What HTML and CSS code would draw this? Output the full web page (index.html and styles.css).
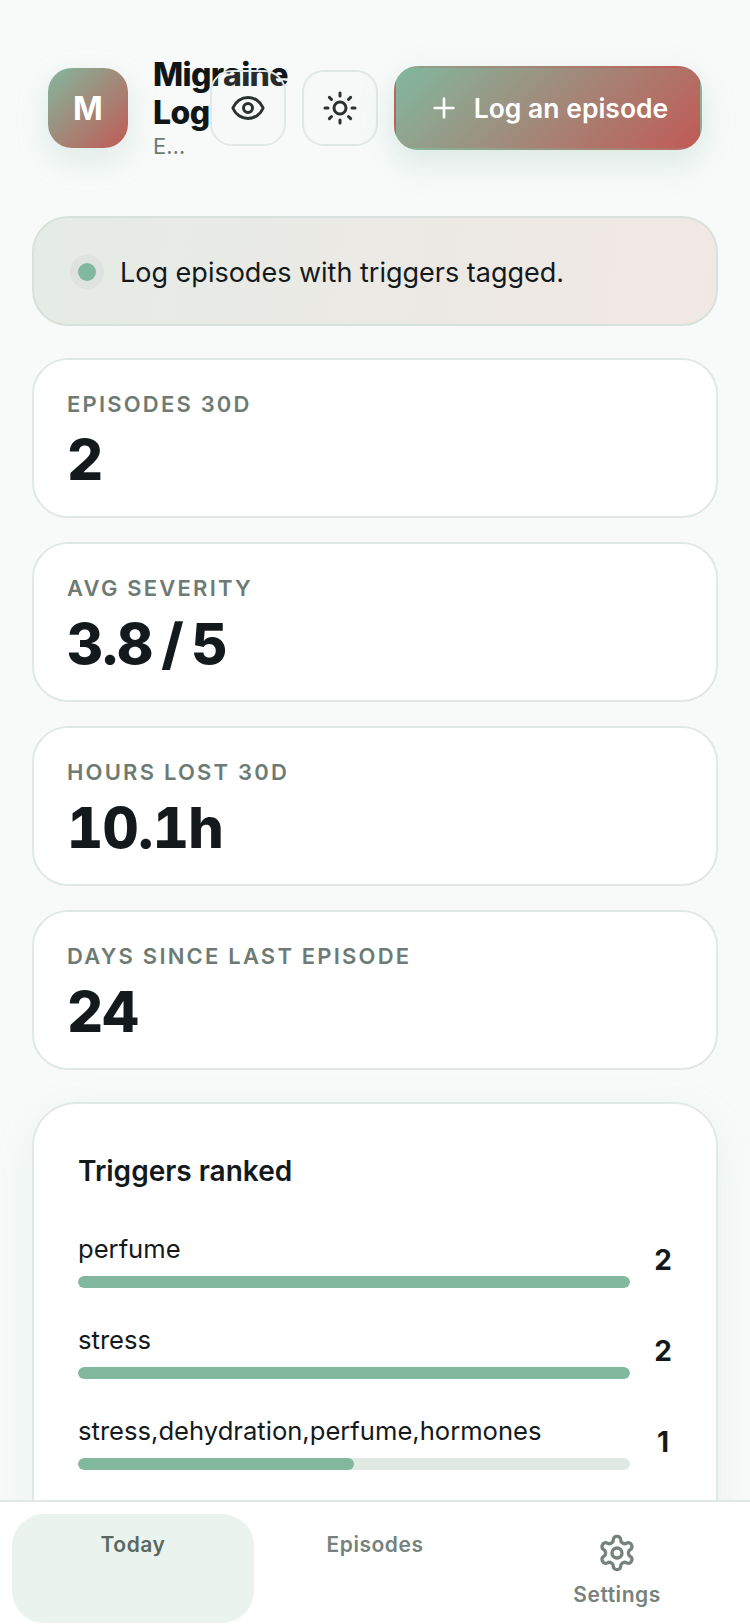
FILE: index.html
```html
<!DOCTYPE html>
<html lang="en">
<head>
    <meta charset="UTF-8">
    <meta name="viewport" content="width=device-width, initial-scale=1.0">
    <title>Migraine Log</title>
    <link rel="stylesheet" href="styles.css">
</head>
<body>
    <div class="app">
        <main class="content">
            <!-- header -->
            <header class="top">
                <div class="brand">
                    <div class="avatar">M</div>
                    <div class="brand-text">
                        <h1 class="brand-title">Migraine Log</h1>
                        <p class="brand-sub">Episodes and triggers</p>
                    </div>
                </div>
                <button class="icon-btn" aria-label="Privacy">
                    <svg class="icon" viewBox="0 0 24 24"><path d="M2.062 12.348a1 1 0 0 1 0-.696 10.75 10.75 0 0 1 19.876 0 1 1 0 0 1 0 .696 10.75 10.75 0 0 1-19.876 0"/><circle cx="12" cy="12" r="3"/></svg>
                </button>
                <button class="icon-btn" aria-label="Theme">
                    <svg class="icon" viewBox="0 0 24 24"><circle cx="12" cy="12" r="4"/><path d="M12 2v2"/><path d="M12 20v2"/><path d="m4.93 4.93 1.41 1.41"/><path d="m17.66 17.66 1.41 1.41"/><path d="M2 12h2"/><path d="M20 12h2"/><path d="m6.34 17.66-1.41 1.41"/><path d="m19.07 4.93-1.41 1.41"/></svg>
                </button>
                <button class="cta">
                    <svg class="icon icon-plus" viewBox="0 0 24 24"><path d="M5 12h14"/><path d="M12 5v14"/></svg>
                    Log an episode
                </button>
            </header>

            <!-- notice -->
            <section class="notice">
                <span class="notice-dot"></span>
                <span>Log episodes with triggers tagged.</span>
            </section>

            <!-- stats -->
            <section class="stat">
                <div class="stat-label">EPISODES 30D</div>
                <div class="stat-value">2</div>
            </section>
            <section class="stat">
                <div class="stat-label">AVG SEVERITY</div>
                <div class="stat-value">3.8 / 5</div>
            </section>
            <section class="stat">
                <div class="stat-label">HOURS LOST 30D</div>
                <div class="stat-value">10.1h</div>
            </section>
            <section class="stat">
                <div class="stat-label">DAYS SINCE LAST EPISODE</div>
                <div class="stat-value">24</div>
            </section>

            <!-- triggers -->
            <section class="panel">
                <h2 class="panel-title">Triggers ranked</h2>
                <div class="rank">
                    <div class="rank-main">
                        <div class="rank-name">perfume</div>
                        <div class="track"><div class="fill" style="width: 100%"></div></div>
                    </div>
                    <div class="rank-count">2</div>
                </div>
                <div class="rank">
                    <div class="rank-main">
                        <div class="rank-name">stress</div>
                        <div class="track"><div class="fill" style="width: 100%"></div></div>
                    </div>
                    <div class="rank-count">2</div>
                </div>
                <div class="rank">
                    <div class="rank-main">
                        <div class="rank-name">stress,dehydration,perfume,hormones</div>
                        <div class="track"><div class="fill" style="width: 50%"></div></div>
                    </div>
                    <div class="rank-count">1</div>
                </div>
            </section>
        </main>

        <!-- bottom nav -->
        <nav class="tabs">
            <a class="tab tab-active">Today</a>
            <a class="tab">Episodes</a>
            <a class="tab">
                <svg class="icon tab-icon" viewBox="0 0 24 24"><path d="M12.22 2h-.44a2 2 0 0 0-2 2v.18a2 2 0 0 1-1 1.73l-.43.25a2 2 0 0 1-2 0l-.15-.08a2 2 0 0 0-2.73.73l-.22.38a2 2 0 0 0 .73 2.73l.15.1a2 2 0 0 1 1 1.72v.51a2 2 0 0 1-1 1.74l-.15.09a2 2 0 0 0-.73 2.73l.22.38a2 2 0 0 0 2.73.73l.15-.08a2 2 0 0 1 2 0l.43.25a2 2 0 0 1 1 1.73V20a2 2 0 0 0 2 2h.44a2 2 0 0 0 2-2v-.18a2 2 0 0 1 1-1.73l.43-.25a2 2 0 0 1 2 0l.15.08a2 2 0 0 0 2.73-.73l.22-.39a2 2 0 0 0-.73-2.73l-.15-.08a2 2 0 0 1-1-1.74v-.5a2 2 0 0 1 1-1.74l.15-.09a2 2 0 0 0 .73-2.73l-.22-.38a2 2 0 0 0-2.73-.73l-.15.08a2 2 0 0 1-2 0l-.43-.25a2 2 0 0 1-1-1.73V4a2 2 0 0 0-2-2z"/><circle cx="12" cy="12" r="3"/></svg>
                Settings
            </a>
        </nav>
    </div>
</body>
</html>
```

FILE: styles.css
```css
* {
    margin: 0;
    padding: 0;
    box-sizing: border-box;
}

body {
    font-family: Inter, "Liberation Sans", sans-serif;
    color: #14191b;
    background-color: #f7faf9;
}

.app {
    width: 750px;
    height: 1624px;
    display: flex;
    flex-direction: column;
    overflow: hidden;
}

.content {
    flex: 1;
    min-height: 0;
    overflow: hidden;
    padding: 66px 32px 0;
}

.icon {
    width: 36px;
    height: 36px;
    fill: none;
    stroke: currentColor;
    stroke-width: 2;
    stroke-linecap: round;
    stroke-linejoin: round;
}

/* header */
.top {
    display: flex;
    align-items: center;
    gap: 16px;
    padding: 0 16px;
    height: 84px;
    margin-bottom: 66px;
}

.brand {
    flex: 1;
    min-width: 0;
    display: flex;
    align-items: center;
    gap: 25px;
}

.avatar {
    flex: none;
    width: 80px;
    height: 80px;
    border-radius: 24px;
    display: flex;
    align-items: center;
    justify-content: center;
    background-image: linear-gradient(135deg, #82b89e, #c15a55);
    box-shadow: 0 12px 32px rgba(130, 184, 158, 0.22);
    color: #fff;
    font-size: 32px;
    font-weight: 700;
}

.brand-text {
    min-width: 0;
    flex: 1;
}

.brand-title {
    font-size: 32px;
    line-height: 38px;
    font-weight: 800;
    letter-spacing: -0.02em;
    color: #101517;
}

.brand-sub {
    font-size: 22px;
    line-height: 28px;
    color: #6d7b74;
    white-space: nowrap;
    overflow: hidden;
    text-overflow: ellipsis;
}

.icon-btn {
    flex: none;
    width: 76px;
    height: 76px;
    border-radius: 22px;
    border: 2px solid #e0e9e5;
    background-color: rgba(247, 250, 249, 0.1);
    color: #2a3230;
    display: flex;
    align-items: center;
    justify-content: center;
}

.cta {
    flex: none;
    width: 308px;
    height: 84px;
    border-radius: 24px;
    border: 2px solid transparent;
    background-image: linear-gradient(135deg, #82b89e, #c15a55);
    box-shadow: 0 12px 32px rgba(130, 184, 158, 0.25);
    color: #fff;
    font-family: inherit;
    font-size: 26.5px;
    font-weight: 600;
    display: flex;
    align-items: center;
    justify-content: center;
    gap: 14px;
}

.icon-plus {
    width: 32px;
    height: 32px;
}

/* notice */
.notice {
    height: 110px;
    border-radius: 36px;
    border: 2px solid #d8e1db;
    background-image: linear-gradient(100deg, #e5ebe6, #f1e8e4);
    display: flex;
    align-items: center;
    gap: 16px;
    padding: 2px 36px 0;
    font-size: 27px;
    margin-bottom: 32px;
}

.notice-dot {
    flex: none;
    width: 18px;
    height: 18px;
    margin: 0 8px;
    border-radius: 50%;
    background-color: #82b89e;
    box-shadow: 0 0 0 8px #dfe3df;
}

/* stats */
.stat {
    height: 160px;
    background-color: #fff;
    border: 2px solid #e0e9e5;
    border-radius: 36px;
    padding: 30px 33px 0;
    margin-bottom: 24px;
}

.stat-label {
    font-size: 22px;
    line-height: 28px;
    font-weight: 600;
    letter-spacing: 0.1em;
    color: #6d7b74;
}

.stat-value {
    margin-top: 8px;
    font-size: 56px;
    line-height: 68px;
    font-weight: 800;
    letter-spacing: -0.01em;
    word-spacing: -6px;
    font-variant-numeric: tabular-nums;
    color: #14191b;
}

/* triggers panel */
.panel {
    margin-top: 32px;
    background-color: #fff;
    border: 2px solid #e0e9e5;
    border-radius: 44px;
    padding: 49px 44px;
    box-shadow: 0 12px 40px rgba(130, 184, 158, 0.12);
}

.panel-title {
    font-size: 28px;
    line-height: 36px;
    font-weight: 600;
    margin-bottom: 42px;
}

.rank {
    display: flex;
    align-items: center;
    gap: 24px;
    margin-bottom: 34px;
}

.rank-main {
    flex: 1;
    min-width: 0;
}

.rank-name {
    font-size: 25.6px;
    line-height: 36px;
    margin-bottom: 9px;
}

.track {
    height: 12px;
    border-radius: 6px;
    background-color: #e1e9e4;
    overflow: hidden;
}

.fill {
    height: 100%;
    border-radius: 6px;
    background-color: #82b89e;
}

.rank-count {
    width: 18px;
    text-align: center;
    font-size: 28px;
    font-weight: 700;
}

/* bottom nav */
.tabs {
    flex: none;
    height: 124px;
    border-top: 2px solid #e0e9e5;
    background-color: #fff;
    display: grid;
    grid-template-columns: repeat(3, 1fr);
    padding: 12px 12px 1px;
}

.tab {
    display: flex;
    flex-direction: column;
    align-items: center;
    gap: 6px;
    padding-top: 15px;
    border-radius: 32px;
    font-size: 21px;
    line-height: 32px;
    font-weight: 600;
    letter-spacing: 0.025em;
    color: #76827c;
}

.tab-active {
    background-color: #ebf3ef;
    color: #5b6862;
}

.tab-icon {
    width: 40px;
    height: 40px;
    margin-top: 4px;
}
```
